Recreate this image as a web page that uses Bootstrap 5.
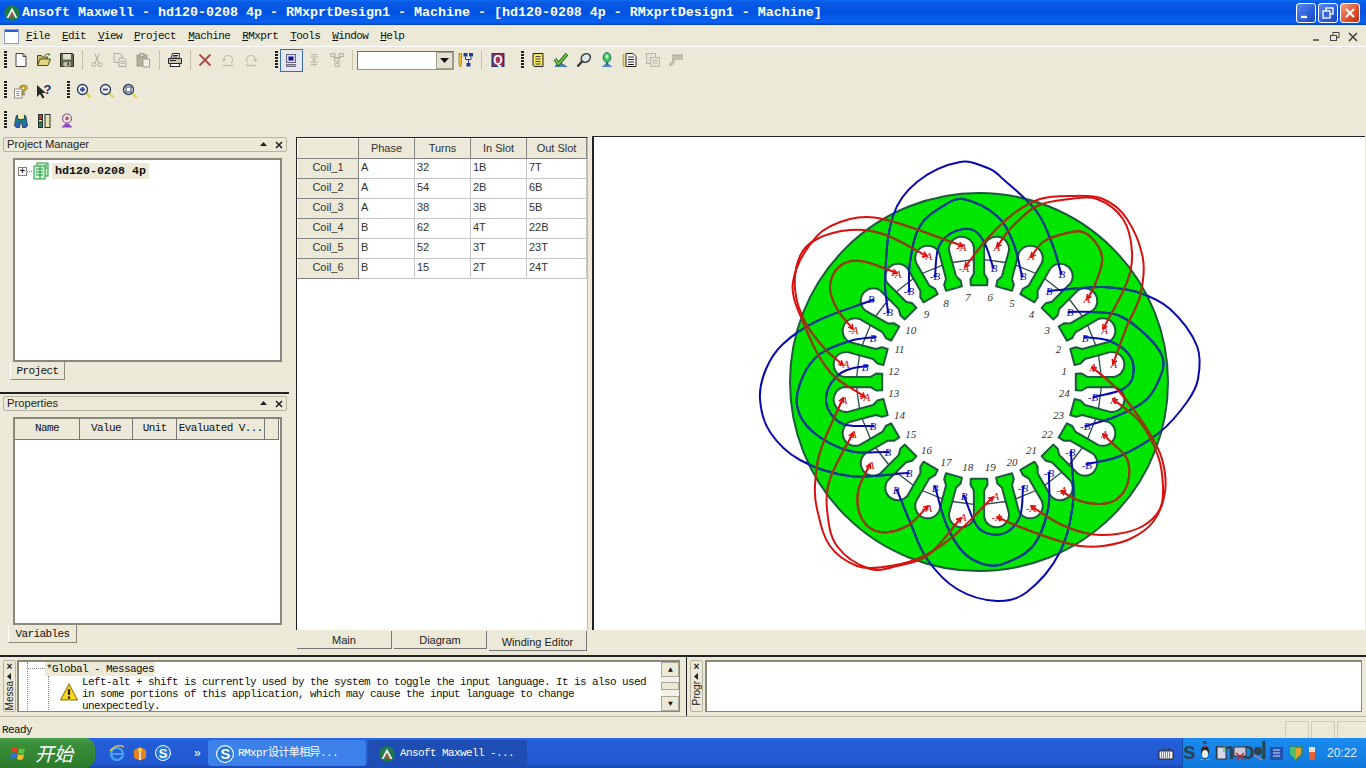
<!DOCTYPE html>
<html lang="en">
<head>
<meta charset="utf-8">
<title>Ansoft Maxwell</title>
<link rel="stylesheet" href="https://cdn.jsdelivr.net/npm/bootstrap@5.3.0/dist/css/bootstrap.min.css">
<style>
html,body{width:1366px;height:768px;overflow:hidden}
body{background:#ece9d8;color:#111;font-family:"Liberation Sans",Arial,sans-serif;font-size:12px;line-height:1.2}
.mono{font-family:"Liberation Mono","Noto Sans CJK SC",monospace;font-size:11px;letter-spacing:-.6px}
.titlebar{height:25px;color:#fff;padding:0 4px;background:linear-gradient(180deg,#0a6af0 0,#0a5ae6 10%,#0052e0 50%,#0a62f0 88%,#0040c8 100%)}
.title-text{font-family:"Liberation Mono",monospace;font-size:13.34px;font-weight:700;margin-left:2px;white-space:pre}
.wbtn{width:20px;height:20px;border:1px solid #fff;border-radius:3px;background:linear-gradient(135deg,#5b8cf0,#2a5cd8 60%,#1c48c0);margin-right:2px}
.wbtn.cl{background:linear-gradient(135deg,#f0a080,#e05030 60%,#c03010)}
.menubar{height:22px;padding:2px 4px 0;border-bottom:1px solid #fff}
.menu-items{gap:12px;margin-left:7px}
.menu-items u{text-decoration:underline}
.mdi{gap:6px;margin-right:3px}
.tb{height:26px;padding-left:4px}
.tb+.tb{margin-top:4px}
.tb+.tb .ti{padding-top:1px}
.tgrip{width:3px;height:18px;background:repeating-linear-gradient(180deg,#222 0 2px,#ece9d8 2px 3px)}
.gr1{margin-left:2.5px}
.ti{width:23px;height:23px}
.ti.on{background:#e6e6f0;border:1px solid #3a6ea5}
.tsep{width:1px;height:20px;background:#c8c4b0;margin:0 3px}
.tsep.w9{margin:0 4px}
.tsep.w8{margin:0 3.750px}
.tgrp{width:3px;height:18px;margin:0 2px 0 12px;background:repeating-linear-gradient(180deg,#222 0 2px,#ece9d8 2px 3px)}
.tgrp2{margin:0 3px 0 11px}
.tcombo{width:97px;height:19px;background:#fff;border:1px solid #9a978a;border-top-color:#716f64;border-left-color:#716f64;padding:0}
.tcaret{width:17px;background:#e4e1d0;border:1px solid #a0a090}
.workarea{height:522px}
.lcol{width:289px}
.lsec1{height:259px}
.lsplit{height:2px;background:#222;flex:none}
.phead{height:15px;margin:4px 2px 0 3px;padding:0 3px;border:1px solid #b8b4a0;border-radius:2px;font-size:11.200px;color:#222}
.phead2{margin-top:2px}
.pbox{margin:6px 7px 0 13px;background:#fff;border:1px solid #8a8878;border-top-width:2px;border-left-width:2px;border-right:2px solid #8a8878;border-bottom:2px solid #8a8878}
.treebox{height:204px;padding:3px 0 0 3px}
.pgbox{height:208px}
.treerow{height:16px}
.expbox{width:9px;height:9px;border:1px solid #808080;font-size:9px;line-height:6px;text-align:center;font-weight:700}
.dotted-h{width:5px;border-bottom:1px dotted #888}
.treename{font-family:"Liberation Mono",monospace;font-size:11.67px;font-weight:700;background:#ece9d8;padding:0 3px;line-height:16px;margin-left:2px}
.xtab{height:18px;border:1px solid #8a8878;border-top:none;border-left-color:#fff;background:#ece9d8;color:#111;text-align:center}
.xtab1{width:55px;margin-left:10px;border-top:0;line-height:18px}
.xtab2{width:69px;margin-left:8px;height:18px;line-height:18px}
.ptbl{border-collapse:collapse;table-layout:fixed;width:264px}
.ptbl th{height:20px;padding:0;background:#ece9d8;font-weight:400;text-align:center;border-right:1px solid #777;border-bottom:1px solid #777;white-space:nowrap}
.pc1{width:64px}.pc2{width:53px}.pc3{width:44px}.pc4{width:87px}.pc5{width:14px}
.gc0{width:61px}.gc1{width:56px}.gc4{width:60px}
.mcol{width:292px;margin-left:7px;margin-top:4px}
.gridbox{height:493px;border-left:1px solid #222;border-top:1px solid #222;border-right:1px solid #bbb;background:#fff;flex:none}
.table.gridtbl{table-layout:fixed;width:289px;margin:0;font-size:11px;color:#333}
.table.gridtbl>:not(caption)>*>*{padding:0 0 1px 2px;height:20px;border:1px solid #c8c8c8;line-height:17px;background:#fff;color:#333;box-shadow:none}
.table.gridtbl>:not(caption)>*>th{padding:0 0 1px 0;text-align:center;font-weight:400;background:#ece9d8;border-color:#fff #848484 #848484 #fff}
.gtabs{gap:2px;padding-left:1px;font-size:11px}
.gtab{height:18px;margin-top:1px;border-right:1px solid #777;border-bottom:1px solid #777;background:#ece9d8;text-align:center;line-height:18px;color:#222}
.gt1{width:95px}.gt2{width:93px}.gt3{width:98px;height:20px;line-height:22px;border-top:0}
.rcol{width:773px;margin-left:4px;margin-top:3px;border-left:2px solid #222;border-top:1px solid #222;height:494px;background:#fff}
.motor{display:block}
.svnum{font-family:"Liberation Serif",serif;font-style:italic;font-size:11px;fill:#333;text-anchor:middle}
.svlab{font-family:"Liberation Serif",serif;font-style:italic;font-size:11px;text-anchor:middle}
.msgrow{height:61px;border-top:2px solid #222;flex:none}
.handle{width:13px;height:52px;margin:3px 0 0 3px;border:1px solid #b8b4a0;border-radius:2px;font-size:10px;color:#222;text-align:center;overflow:hidden}
.handle b{font-size:10px;line-height:11px}
.vtxt{writing-mode:vertical-rl;transform:rotate(180deg);font-size:10px;line-height:11px}
.msgbox{width:663px;height:52px;margin:3px 0 0 1px;border:1px solid #8a8878;border-left-width:2px;border-top-width:2px;background:#fff;overflow:hidden}
.msgtree{margin-left:8px;border-left:1px dotted #888;overflow:hidden;height:50px}
.msg1{height:14px;line-height:14px}
.stub{width:17px;border-bottom:1px dotted #888;height:7px}
.hl{background:#ece9d8;padding:0 1px}
.msg2{line-height:12px;margin-left:20px;border-left:1px dotted #888}
.warn{width:33px;padding-left:11px;padding-top:7px;flex:none}
.sbar{width:18px;flex:none;background:#f4f2e8}
.sb-btn{height:15px;background:#ece9d8;border:1px solid #a8a898;font-size:8px;line-height:13px;text-align:center}
.sb-th{height:8px;margin-top:5px;background:#ece9d8;border:1px solid #a8a898}
.vsplit{width:1px;height:59px;background:#222;margin-left:6px}
.pbox2{width:657px;height:52px;margin:3px 0 0 2px;border:1px solid #8a8878;border-left-width:2px;border-top-width:2px;background:#fff}
.statusbar{height:22px;border-top:1px solid #b8b4a0;flex:none;padding:7px 0 0 2px}
.spane{height:17px;width:24px;border:1px solid #d0ccba;border-bottom:0;margin-right:2px;align-self:flex-end}
.spane.w{width:31px;margin-right:-2px}
.taskbar{height:30px;background:linear-gradient(180deg,#2a6be8 0,#245ed8 12%,#2058d0 85%,#1a48b0 100%);color:#fff;flex:none}
.startb{width:95px;height:30px;border-radius:0 10px 10px 0;background:linear-gradient(180deg,#4aa24a 0,#3a8e3a 20%,#2e7d2e 90%);padding-left:9px;gap:6px}
.startt{font-family:"Noto Sans CJK SC",sans-serif;font-size:19px;font-style:italic;color:#fff}
.ql{width:113px;padding-left:14px;gap:7px}
.tbtn{width:158px;height:26px;margin-right:2px;border-radius:3px;background:#3c80ea;padding:2px 0 0 8px;gap:4px;white-space:nowrap;color:#fff}
.tbtn.act{width:159px;background:#1e4eb4;padding-left:11px;gap:5px}
.tray{width:184px;height:30px;background:linear-gradient(180deg,#1a8cf0,#1078dc);border-left:1px solid #0c50b0;padding-left:16px;gap:5px}
.wm{font-family:"Liberation Sans",sans-serif;font-weight:700;font-size:23px;color:#2c4258;letter-spacing:6px;left:0;top:0}
.clock{font-size:12px;color:#e4eefc;margin-left:6px}
</style>
</head>
<body class="d-flex flex-column">
<svg class="d-none" xmlns="http://www.w3.org/2000/svg">
<symbol id="i-new" viewBox="0 0 16 16"><path d="M3 1.500h7l3 3v10H3z" fill="#fff" stroke="#444"/><path d="M10 1.500v3h3" fill="none" stroke="#444"/></symbol>
<symbol id="i-open" viewBox="0 0 16 16"><path d="M1.500 13.500v-10h4l1 1.500h5v2" fill="#c8bc70" stroke="#4a4a20"/><path d="M1.500 13.500L4 7h10.500L12 13.500z" fill="#e4d67c" stroke="#4a4a20"/><path d="M8 4q3-3.500 6-1.500" fill="none" stroke="#4a7a3a"/><path d="M13 1l1.500 2-2.500 .5z" fill="#4a7a3a"/></symbol>
<symbol id="i-save" viewBox="0 0 16 16"><path d="M1.500 1.500h12l1 1v12h-13z" fill="#62664a" stroke="#2a2c1c"/><rect x="4" y="2" width="8" height="5.500" fill="#e0e0d0"/><rect x="4.500" y="10" width="7" height="4.500" fill="#c0c0b0"/><rect x="8.500" y="10.500" width="1.500" height="3" fill="#333"/></symbol>
<symbol id="i-cut" viewBox="0 0 16 16"><g fill="none" stroke="#b0aea0"><circle cx="5" cy="12.500" r="2"/><circle cx="11" cy="12.500" r="2"/><path d="M6 11L10.500 1.500M10 11L5.500 1.500"/></g></symbol>
<symbol id="i-copy" viewBox="0 0 16 16"><g fill="#e8e6da" stroke="#b0aea0"><path d="M2 1.500h6l2 2v7H2z"/><path d="M7 6h5l2 2v6.500H7z"/></g><path d="M8.500 9.500h4M8.500 11.500h4" stroke="#b0aea0"/></symbol>
<symbol id="i-paste" viewBox="0 0 16 16"><rect x="2" y="3" width="10" height="11" fill="#b0ae9c" stroke="#a0a090"/><rect x="5" y="1.500" width="4" height="3" fill="#d8d4c0" stroke="#a0a090"/><path d="M8 7h6.500v8H8z" fill="#f0eee4" stroke="#a0a090"/></symbol>
<symbol id="i-print" viewBox="0 0 16 16"><path d="M4 6l1.500-4.500h7L12 6" fill="#fff" stroke="#222"/><path d="M1.500 6.500h13v5h-13z" fill="#c8c4b0" stroke="#222"/><path d="M4 11.500l-1 3h10l-1-3z" fill="#fff" stroke="#222"/><path d="M6 3.500h5M5.500 5h5M3 8.500h6" stroke="#222"/></symbol>
<symbol id="i-x" viewBox="0 0 16 16"><path d="M2.500 2.500l11 11M13.500 2.500l-11 11" stroke="#b04a44" stroke-width="1.800" fill="none"/></symbol>
<symbol id="i-undo" viewBox="0 0 16 16"><path d="M4 8.500Q3.500 3.500 8 3.500T12.500 8q0 2-1.500 3" fill="none" stroke="#c4c0b0" stroke-width="1.200"/><path d="M1.500 7l2.500 3L6 7z" fill="#c4c0b0"/><path d="M3 13.500h10" stroke="#c4c0b0" stroke-width="1.500"/></symbol>
<symbol id="i-redo" viewBox="0 0 16 16"><path d="M12 8.500Q12.500 3.500 8 3.500T3.500 8q0 2 1.500 3" fill="none" stroke="#c4c0b0" stroke-width="1.200"/><path d="M10 7l2 3 2.500-3z" fill="#c4c0b0"/><path d="M3 13.500h10" stroke="#c4c0b0" stroke-width="1.500"/></symbol>
<symbol id="i-mon" viewBox="0 0 16 16"><rect x="3.500" y="2.500" width="9" height="8" fill="#dcdce8" stroke="#667"/><rect x="5.500" y="4.500" width="5" height="4" fill="#10109a"/><path d="M3.500 12.500h9v2h-9z" fill="#b8b4c0" stroke="#667"/></symbol>
<symbol id="i-g1" viewBox="0 0 16 16"><g stroke="#bcb8a8" fill="none"><path d="M5 2.500h6M4 5h8M6 7.500h4M4 10h8M5 12.500h6"/><path d="M8 2.500v12"/></g></symbol>
<symbol id="i-g2" viewBox="0 0 16 16"><g stroke="#bcb8a8" fill="#e4e2d4"><rect x="1.500" y="1.500" width="4.500" height="3"/><rect x="10" y="1.500" width="4.500" height="3"/><rect x="5.500" y="6.500" width="5" height="3"/><rect x="6" y="11.500" width="4" height="3"/><path d="M4 4.500v1h8v-1M8 9.500v2" fill="none"/></g></symbol>
<symbol id="i-tree" viewBox="0 0 16 16"><path d="M1 1.500h2.500v11L2.300 15 1 12.500z" fill="#f0c828" stroke="#70581a" stroke-width=".6"/><g fill="#223c90"><rect x="5.500" y="1" width="4" height="3.500"/><rect x="11" y="1" width="4" height="3.500"/><rect x="8.500" y="11" width="4" height="3.500"/></g><path d="M7.500 4.500v3h5.500v-3M10.500 7.500v3.500" fill="none" stroke="#223c90"/></symbol>
<symbol id="i-q" viewBox="0 0 16 16"><rect x="1.500" y="1" width="13" height="14" fill="#30306a"/><rect x="3" y="2" width="10" height="12" fill="#a03058"/><text x="8" y="12.300" text-anchor="middle" font-family="Liberation Sans" font-size="12" font-weight="700" fill="#fff">Q</text></symbol>
<symbol id="i-ydoc" viewBox="0 0 16 16"><path d="M3 1.500h10v13H5l-2-1z" fill="#f0e460" stroke="#222"/><path d="M5.500 4.500h5M5.500 7h5M5.500 9.500h5M5.500 12h5" stroke="#444"/></symbol>
<symbol id="i-chk" viewBox="0 0 16 16"><path d="M2 15q3-6 6-4t6 4" fill="#5080d0" stroke="#204080" stroke-width=".7"/><path d="M2 7l3.500 5L14 2" fill="none" stroke="#2a5a28" stroke-width="3.600"/><path d="M2 7l3.500 5L14 2" fill="none" stroke="#70d040" stroke-width="1.800"/></symbol>
<symbol id="i-mag" viewBox="0 0 16 16"><ellipse cx="9.800" cy="6" rx="4.800" ry="4" transform="rotate(-35 9.800 6)" fill="#d8e8e8" stroke="#333" stroke-width="1.500"/><path d="M6 9.500L1.500 14.500" stroke="#333" stroke-width="2.300"/></symbol>
<symbol id="i-fig" viewBox="0 0 16 16"><path d="M2.500 15L8 10.500 13.500 15z" fill="#5088d0"/><ellipse cx="8" cy="5.500" rx="3.800" ry="4.800" fill="#40c868" stroke="#106a50"/><ellipse cx="8" cy="4.500" rx="1.500" ry="2" fill="#d0f0c0"/><path d="M8 10v3" stroke="#106a50" stroke-width="1.500"/></symbol>
<symbol id="i-dl" viewBox="0 0 16 16"><path d="M4 1.500h7l3 3v10H4z" fill="#fff" stroke="#222"/><path d="M6 5h6M6 7.500h6M6 10h6M6 12.500h6" stroke="#222"/><path d="M1.500 2v11l.8 2" stroke="#d8a820" stroke-width="1.600" fill="none"/></symbol>
<symbol id="i-gd" viewBox="0 0 16 16"><g fill="#e4e2d6" stroke="#bcb8a8"><rect x="1.500" y="1.500" width="9" height="10"/><rect x="5.500" y="5.500" width="9" height="9"/></g><path d="M7.500 8.500h5M7.500 11h5" stroke="#bcb8a8"/></symbol>
<symbol id="i-gf" viewBox="0 0 16 16"><path d="M4 3h11v5H7v2H4zM1 12l3-3h2v3l-3 2H1z" fill="#c4c0b0"/><path d="M4 3h11" stroke="#a8a498"/></symbol>
<symbol id="i-hdoc" viewBox="0 0 16 16"><path d="M1.500 6h7.500v9H1.500z" fill="#fff" stroke="#8a8a7a"/><path d="M3.500 8.500h3M3.500 10.500h3M3.500 12.500h3" stroke="#8a8a7a"/><text x="10.500" y="11.500" text-anchor="middle" font-family="Liberation Sans" font-size="15" font-weight="700" fill="#e4c020" stroke="#6a5a18" stroke-width=".5">?</text></symbol>
<symbol id="i-harr" viewBox="0 0 16 16"><path d="M1 2v12l3-3 2.500 4.500 2-1-2.500-4.500h4z" fill="#2a2a2a"/><text x="11.500" y="10.500" text-anchor="middle" font-family="Liberation Sans" font-size="13" font-weight="700" fill="#28286a">?</text></symbol>
<symbol id="i-zp" viewBox="0 0 16 16"><path d="M10 10l4.500 4.500" stroke="#e0d050" stroke-width="2.300"/><circle cx="6.500" cy="6.500" r="5" fill="#f4f4f0" stroke="#283858" stroke-width="1.300"/><path d="M4 6.500h5M6.500 4v5" stroke="#3040a8" stroke-width="1.800"/></symbol>
<symbol id="i-zm" viewBox="0 0 16 16"><path d="M10 10l4.500 4.500" stroke="#e0d050" stroke-width="2.300"/><circle cx="6.500" cy="6.500" r="5" fill="#f4f4f0" stroke="#283858" stroke-width="1.300"/><path d="M4 6.500h5" stroke="#3040a8" stroke-width="1.800"/></symbol>
<symbol id="i-zb" viewBox="0 0 16 16"><path d="M10 10l4.500 4.500" stroke="#e0d050" stroke-width="2.300"/><circle cx="6.500" cy="6.500" r="5" fill="#f4f4f0" stroke="#283858" stroke-width="1.300"/><rect x="4" y="4" width="5" height="5" fill="#fff" stroke="#283858"/></symbol>
<symbol id="i-bin" viewBox="0 0 16 16"><path d="M3 4q0-1.500 2-2v4h6V2q2 .5 2 2l1.500 9-2 1.500h-3L8.500 9h-1l-1 5.500h-3l-2-1.500z" fill="#1c7a90" stroke="#123" stroke-width=".7"/><rect x="5" y="1" width="6" height="5" rx="2" fill="#f0f0b0"/><rect x="2.500" y="10" width="3.500" height="4" fill="#3060c0"/><rect x="10" y="10" width="3.500" height="4" fill="#3060c0"/></symbol>
<symbol id="i-bars" viewBox="0 0 16 16"><rect x="2.500" y="1.500" width="4" height="13" fill="#e8e8c0" stroke="#233"/><rect x="2.500" y="1.500" width="4" height="5" fill="#c04030" stroke="#233"/><rect x="2.500" y="9" width="4" height="5.500" fill="#30804a" stroke="#233"/><rect x="9" y="1.500" width="5" height="13" fill="#e8e4b0" stroke="#233"/></symbol>
<symbol id="i-pf" viewBox="0 0 16 16"><circle cx="8" cy="5.500" r="4.500" fill="#f4e4e4" stroke="#806090" stroke-width="1.200"/><circle cx="8" cy="5.500" r="2" fill="#c06068"/><path d="M8 10c-2 .5-3 2-5.500 4.500h11C11 12 10 10.500 8 10z" fill="#8848c8"/></symbol>
<symbol id="i-logo" viewBox="0 0 16 16"><circle cx="8" cy="8" r="7.800" fill="#1e7a4a"/><path d="M8 2.500L2.500 13h2L8 6.500 11.500 13h2z" fill="#f4f4ec"/><path d="M8 7L5.500 13h1.300L8 10l1.200 3h1.300z" fill="#d05040"/></symbol>
<symbol id="i-proj" viewBox="0 0 18 18"><rect x="5" y="1" width="11" height="13" fill="#c8f0c8" stroke="#1e9a3a"/><rect x="2" y="4" width="11" height="13" fill="#d8f4d8" stroke="#1e9a3a"/><path d="M4 7h7M4 10h7M4 13h7M8 4v13" stroke="#1e9a3a"/><path d="M13 3h2M13 6h2" stroke="#1e9a3a"/></symbol>
<symbol id="i-warn" viewBox="0 0 16 16"><path d="M8 1L15.500 15H.5z" fill="#ffd820" stroke="#a08010"/><path d="M8 5.500v5" stroke="#222" stroke-width="2"/><circle cx="8" cy="12.800" r="1.100" fill="#222"/></symbol>
<symbol id="i-ie" viewBox="0 0 16 16"><ellipse cx="8" cy="9" rx="6" ry="6" fill="none" stroke="#4aa0f0" stroke-width="2.400"/><path d="M3 9h10" stroke="#4aa0f0" stroke-width="2"/><path d="M1 6q7-8 14-4" fill="none" stroke="#f4d040" stroke-width="1.200"/></symbol>
<symbol id="i-box" viewBox="0 0 16 16"><path d="M2 5l6-3 6 3v8l-6 2.500L2 13z" fill="#e88020"/><path d="M8 7v8" stroke="#fff" stroke-width="1.500"/><circle cx="8" cy="5" r="2" fill="#f4e040"/></symbol>
<symbol id="i-s" viewBox="0 0 16 16"><circle cx="8" cy="8" r="7.500" fill="#2478d8" stroke="#fff"/><text x="8" y="12.500" text-anchor="middle" font-family="Liberation Sans" font-size="13" font-weight="700" fill="#fff">S</text></symbol>
<symbol id="i-kb" viewBox="0 0 16 16"><rect x="1" y="6" width="14" height="8" fill="#f0f0f0" stroke="#222"/><path d="M3 8h10M3 10h10M3 12h10" stroke="#222" stroke-dasharray="1 1"/><path d="M4 4h9" stroke="#222" stroke-dasharray="1 1"/></symbol>
<symbol id="i-flag" viewBox="0 0 20 20"><path d="M3 5q3-2 6 0l-1 5q-3-2-6 0z" fill="#e04020"/><path d="M10 5q3 2 6 0l-1 5q-3 2-6 0z" fill="#60c040"/><path d="M2 11q3-2 6 0l-1 5q-3-2-6 0z" fill="#3070e0"/><path d="M9 11q3 2 6 0l-1 5q-3 2-6 0z" fill="#f0c020"/></symbol>
</svg>

<div class="titlebar d-flex align-items-center">
  <svg width="16" height="16"><use href="#i-logo"/></svg>
  <span class="title-text flex-grow-1">Ansoft Maxwell - hd120-0208 4p - RMxprtDesign1 - Machine - [hd120-0208 4p - RMxprtDesign1 - Machine]</span>
  <span class="wbtn d-flex align-items-center justify-content-center"><svg width="14" height="14"><path d="M2 11h6" stroke="#fff" stroke-width="2.400"/></svg></span>
  <span class="wbtn d-flex align-items-center justify-content-center"><svg width="14" height="14"><g fill="none" stroke="#fff" stroke-width="1.300"><rect x="5" y="2" width="7" height="6"/><rect x="2" y="5" width="7" height="7" fill="#3a68d8"/></g></svg></span>
  <span class="wbtn cl d-flex align-items-center justify-content-center"><svg width="14" height="14"><path d="M3 3l8 8M11 3l-8 8" stroke="#fff" stroke-width="2"/></svg></span>
</div>
<div class="menubar d-flex align-items-center mono">
  <svg width="15" height="15"><rect x=".5" y=".5" width="14" height="14" fill="#fff" stroke="#8aa0d0"/><rect x="1" y="1" width="13" height="2" fill="#2a5cd8"/></svg>
  <div class="menu-items d-flex flex-grow-1">
    <span><u>F</u>ile</span><span><u>E</u>dit</span><span><u>V</u>iew</span><span><u>P</u>roject</span><span><u>M</u>achine</span><span><u>R</u>Mxprt</span><span><u>T</u>ools</span><span><u>W</u>indow</span><span><u>H</u>elp</span>
  </div>
  <div class="mdi d-flex align-items-center">
    <svg width="12" height="12"><path d="M2 9h6" stroke="#444" stroke-width="1.500"/></svg>
    <svg width="12" height="12"><g fill="none" stroke="#444"><rect x="4" y="1.500" width="6" height="5"/><rect x="1.500" y="4.500" width="6" height="5" fill="#ece9d8"/></g></svg>
    <svg width="12" height="12"><path d="M2 2l8 8M10 2l-8 8" stroke="#333" stroke-width="1.400"/></svg>
  </div>
</div>

<div class="tb d-flex align-items-center">
  <span class="tgrip"></span>
  <span class="ti gr1 d-flex align-items-center justify-content-center"><svg width="16" height="16"><use href="#i-new"/></svg></span>
  <span class="ti d-flex align-items-center justify-content-center"><svg width="16" height="16"><use href="#i-open"/></svg></span>
  <span class="ti d-flex align-items-center justify-content-center"><svg width="16" height="16"><use href="#i-save"/></svg></span>
  <span class="tsep"></span>
  <span class="ti d-flex align-items-center justify-content-center"><svg width="16" height="16"><use href="#i-cut"/></svg></span>
  <span class="ti d-flex align-items-center justify-content-center"><svg width="16" height="16"><use href="#i-copy"/></svg></span>
  <span class="ti d-flex align-items-center justify-content-center"><svg width="16" height="16"><use href="#i-paste"/></svg></span>
  <span class="tsep w9"></span>
  <span class="ti d-flex align-items-center justify-content-center"><svg width="16" height="16"><use href="#i-print"/></svg></span>
  <span class="tsep"></span>
  <span class="ti d-flex align-items-center justify-content-center"><svg width="16" height="16"><use href="#i-x"/></svg></span>
  <span class="ti d-flex align-items-center justify-content-center"><svg width="16" height="16"><use href="#i-undo"/></svg></span>
  <span class="ti d-flex align-items-center justify-content-center"><svg width="16" height="16"><use href="#i-redo"/></svg></span>
  <span class="tgrp"></span>
  <span class="ti on d-flex align-items-center justify-content-center"><svg width="16" height="16"><use href="#i-mon"/></svg></span>
  <span class="ti d-flex align-items-center justify-content-center"><svg width="16" height="16"><use href="#i-g1"/></svg></span>
  <span class="ti d-flex align-items-center justify-content-center"><svg width="16" height="16"><use href="#i-g2"/></svg></span>
  <span class="tsep w8"></span>
  <div class="tcombo d-flex justify-content-end"><span class="tcaret d-flex align-items-center justify-content-center"><svg width="9" height="5"><path d="M0 0h9L4.500 5z" fill="#111"/></svg></span></div>
  <span class="ti d-flex align-items-center justify-content-center"><svg width="16" height="16"><use href="#i-tree"/></svg></span>
  <span class="tsep w9"></span>
  <span class="ti d-flex align-items-center justify-content-center"><svg width="16" height="16"><use href="#i-q"/></svg></span>
  <span class="tgrp"></span>
  <span class="ti d-flex align-items-center justify-content-center"><svg width="16" height="16"><use href="#i-ydoc"/></svg></span>
  <span class="ti d-flex align-items-center justify-content-center"><svg width="16" height="16"><use href="#i-chk"/></svg></span>
  <span class="ti d-flex align-items-center justify-content-center"><svg width="16" height="16"><use href="#i-mag"/></svg></span>
  <span class="ti d-flex align-items-center justify-content-center"><svg width="16" height="16"><use href="#i-fig"/></svg></span>
  <span class="ti d-flex align-items-center justify-content-center"><svg width="16" height="16"><use href="#i-dl"/></svg></span>
  <span class="ti d-flex align-items-center justify-content-center"><svg width="16" height="16"><use href="#i-gd"/></svg></span>
  <span class="ti d-flex align-items-center justify-content-center"><svg width="16" height="16"><use href="#i-gf"/></svg></span>
</div>
<div class="tb d-flex align-items-center">
  <span class="tgrip"></span>
  <span class="ti gr1 d-flex align-items-center justify-content-center"><svg width="16" height="16"><use href="#i-hdoc"/></svg></span>
  <span class="ti d-flex align-items-center justify-content-center"><svg width="16" height="16"><use href="#i-harr"/></svg></span>
  <span class="tgrp tgrp2"></span>
  <span class="ti d-flex align-items-center justify-content-center"><svg width="16" height="16"><use href="#i-zp"/></svg></span>
  <span class="ti d-flex align-items-center justify-content-center"><svg width="16" height="16"><use href="#i-zm"/></svg></span>
  <span class="ti d-flex align-items-center justify-content-center"><svg width="16" height="16"><use href="#i-zb"/></svg></span>
</div>
<div class="tb d-flex align-items-center">
  <span class="tgrip"></span>
  <span class="ti gr1 d-flex align-items-center justify-content-center"><svg width="16" height="16"><use href="#i-bin"/></svg></span>
  <span class="ti d-flex align-items-center justify-content-center"><svg width="16" height="16"><use href="#i-bars"/></svg></span>
  <span class="ti d-flex align-items-center justify-content-center"><svg width="16" height="16"><use href="#i-pf"/></svg></span>
</div>

<div class="workarea d-flex">
  <div class="lcol d-flex flex-column">
    <div class="lsec1">
      <div class="phead d-flex align-items-center justify-content-between"><span>Project Manager</span><span class="d-flex gap-2"><svg width="7" height="11"><path d="M0 7h7L3.500 3z" fill="#222"/></svg><svg width="8" height="11"><path d="M1 3l6 6M7 3l-6 6" stroke="#222" stroke-width="1.600"/></svg></span></div>
      <div class="pbox treebox">
        <div class="treerow d-flex align-items-center">
          <span class="expbox">+</span><span class="dotted-h"></span>
          <svg width="18" height="18"><use href="#i-proj"/></svg>
          <span class="treename">hd120-0208 4p</span>
        </div>
      </div>
      <div class="xtab xtab1 mono">Project</div>
    </div>
    <div class="lsplit"></div>
    <div class="phead phead2 d-flex align-items-center justify-content-between"><span>Properties</span><span class="d-flex gap-2"><svg width="7" height="11"><path d="M0 7h7L3.500 3z" fill="#222"/></svg><svg width="8" height="11"><path d="M1 3l6 6M7 3l-6 6" stroke="#222" stroke-width="1.600"/></svg></span></div>
    <div class="pbox pgbox">
      <table class="ptbl mono">
        <colgroup><col class="pc1"><col class="pc2"><col class="pc3"><col class="pc4"><col class="pc5"></colgroup>
        <thead><tr><th>Name</th><th>Value</th><th>Unit</th><th>Evaluated V...</th><th></th></tr></thead>
      </table>
    </div>
    <div class="xtab xtab2 mono">Variables</div>
  </div>

  <div class="mcol d-flex flex-column">
    <div class="gridbox">
      <table class="table table-bordered gridtbl">
        <colgroup><col class="gc0"><col class="gc1"><col class="gc1"><col class="gc1"><col class="gc4"></colgroup>
        <thead><tr><th></th><th>Phase</th><th>Turns</th><th>In Slot</th><th>Out Slot</th></tr></thead>
        <tbody>
          <tr><th>Coil_1</th><td>A</td><td>32</td><td>1B</td><td>7T</td></tr>
          <tr><th>Coil_2</th><td>A</td><td>54</td><td>2B</td><td>6B</td></tr>
          <tr><th>Coil_3</th><td>A</td><td>38</td><td>3B</td><td>5B</td></tr>
          <tr><th>Coil_4</th><td>B</td><td>62</td><td>4T</td><td>22B</td></tr>
          <tr><th>Coil_5</th><td>B</td><td>52</td><td>3T</td><td>23T</td></tr>
          <tr><th>Coil_6</th><td>B</td><td>15</td><td>2T</td><td>24T</td></tr>
        </tbody>
      </table>
    </div>
    <div class="gtabs d-flex align-items-start">
      <div class="gtab gt1">Main</div><div class="gtab gt2">Diagram</div><div class="gtab gt3">Winding Editor</div>
    </div>
  </div>

  <div class="rcol">
    <svg id="motor" class="motor" width="771" height="493" viewBox="594 138 771 493" xmlns="http://www.w3.org/2000/svg"></svg>
  </div>
</div>

<div class="msgrow d-flex align-items-start">
  <div class="handle d-flex flex-column align-items-center"><b>×</b><svg width="7" height="9"><path d="M5 1v7L1 4.500z" fill="#222"/></svg><span class="vtxt">Messa</span></div>
  <div class="msgbox d-flex mono">
    <div class="flex-grow-1 overflow-hidden">
      <div class="msgtree">
        <div class="msg1 d-flex align-items-start"><span class="stub"></span><span class="hl">*Global - Messages</span></div>
        <div class="msg2 d-flex">
          <div class="warn"><svg width="18" height="18"><use href="#i-warn"/></svg></div>
          <div>Left-alt + shift is currently used by the system to toggle the input language. It is also used<br>in some portions of this application, which may cause the input language to change<br>unexpectedly.</div>
        </div>
      </div>
    </div>
    <div class="sbar d-flex flex-column justify-content-between">
      <div><div class="sb-btn">▲</div><div class="sb-th"></div></div>
      <div class="sb-btn">▼</div>
    </div>
  </div>
  <div class="vsplit"></div>
  <div class="handle d-flex flex-column align-items-center"><b>×</b><svg width="7" height="9"><path d="M5 1v7L1 4.500z" fill="#222"/></svg><span class="vtxt">Progr</span></div>
  <div class="pbox2"></div>
</div>

<div class="statusbar d-flex align-items-center justify-content-between mono">
  <span>Ready</span>
  <span class="d-flex align-self-end"><span class="spane"></span><span class="spane"></span><span class="spane w"></span></span>
</div>

<div class="taskbar d-flex align-items-center">
  <div class="startb d-flex align-items-center"><svg width="20" height="20"><use href="#i-flag"/></svg><span class="startt">开始</span></div>
  <div class="ql d-flex align-items-center">
    <svg width="16" height="16"><use href="#i-ie"/></svg>
    <svg width="16" height="16"><use href="#i-box"/></svg>
    <svg width="16" height="16"><use href="#i-s"/></svg>
    <span class="ms-3">»</span>
  </div>
  <div class="tbtn d-flex align-items-center mono"><svg width="18" height="18"><use href="#i-s"/></svg><span>RMxpr设计单相异...</span></div>
  <div class="tbtn act d-flex align-items-center mono"><svg width="16" height="16"><use href="#i-logo"/></svg><span>Ansoft Maxwell -...</span></div>
  <div class="flex-grow-1 d-flex justify-content-end align-items-center pe-2"><svg width="16" height="16"><use href="#i-kb"/></svg></div>
  <div class="tray position-relative d-flex align-items-center">
    <span class="wm position-absolute">simol</span>
    <svg class="position-relative" width="12" height="16" viewBox="0 0 12 16"><ellipse cx="6" cy="6" rx="4" ry="5" fill="#222"/><ellipse cx="6" cy="9" rx="3" ry="4" fill="#f0f0e0"/><path d="M1 14h4v1H1zM7 14h4v1H7z" fill="#e88020"/><circle cx="6" cy="1.500" r="1.300" fill="#d03030"/></svg>
    <svg class="position-relative" width="12" height="14" viewBox="0 0 12 14"><rect x="1" y="1" width="9" height="12" fill="#d8d8e8" stroke="#333"/><path d="M8 0v6" stroke="#30b040"/></svg>
    <svg class="position-relative" width="14" height="15" viewBox="0 0 14 15"><rect x="1" y="1" width="12" height="9" fill="#c8c8d8" stroke="#333"/><path d="M3 7l8 7M11 7l-8 7" stroke="#d02020" stroke-width="1.500"/></svg>
    <svg class="position-relative" width="12" height="15" viewBox="0 0 12 15"><circle cx="6" cy="5" r="4" fill="#304050"/><path d="M2 9l8 5" stroke="#88a" stroke-width="2"/></svg>
    <svg class="position-relative" width="15" height="15" viewBox="0 0 15 15"><rect x="1" y="1" width="13" height="13" fill="#2050b0"/><path d="M4 4h7M4 7h7M4 10h7" stroke="#dde"/></svg>
    <svg class="position-relative" width="14" height="15" viewBox="0 0 14 15"><path d="M1 1h12v7l-6 6-6-6z" fill="#e8a030" stroke="#2a8a5a" stroke-width="1.500"/><path d="M7 1v13L1 8V1z" fill="#50c070"/></svg>
    <svg class="position-relative" width="8" height="15" viewBox="0 0 8 15"><rect x="1" y="1" width="6" height="13" rx="2" fill="#e86030"/><rect x="1" y="1" width="6" height="5" fill="#f0e0d0"/></svg>
    <span class="clock position-relative">20:22</span>
  </div>
</div>

<script>
(function(){
var cx=979,cy=383,R=189;
function P(r,t,deg){var a=deg*Math.PI/180;return [cx+r*Math.cos(a)-t*Math.sin(a),cy-r*Math.sin(a)-t*Math.cos(a)];}
function f(p){return p[0].toFixed(1)+' '+p[1].toFixed(1);}
var inner='',k,th;
for(k=1;k<=24;k++){
  th=7.5+15*(k-1);
  inner+=(k==1?'M':'L')+f(P(97,-4.5,th))+' L'+f(P(103,-5,th))+' L'+f(P(108,-9,th))+' L'+f(P(134,-12.5,th))+' A12.5 12.5 0 0 0 '+f(P(134,12.5,th))+' L'+f(P(108,9,th))+' L'+f(P(103,5,th))+' L'+f(P(97,4.5,th))+' ';
}
inner+='Z';
var outer='M'+(cx-R)+' '+cy+' a'+R+' '+R+' 0 1 0 '+(2*R)+' 0 a'+R+' '+R+' 0 1 0 '+(-2*R)+' 0 Z';
var stator=outer+' '+inner;
function len(a,b){return Math.hypot(a[0]-b[0],a[1]-b[1]);}
function tan(p,i){
  var a=p[i>0?i-1:0],c=p[i<p.length-1?i+1:i],l=len(a,c)||1;
  return [(c[0]-a[0])/l,(c[1]-a[1])/l];
}
function spline(p){
  var d='M'+p[0][0]+' '+p[0][1],i;
  for(i=0;i<p.length-1;i++){
    var b=p[i],c=p[i+1],s=len(b,c)/2.9,t1=tan(p,i),t2=tan(p,i+1);
    d+=' C'+(b[0]+t1[0]*s).toFixed(1)+' '+(b[1]+t1[1]*s).toFixed(1)+' '+(c[0]-t2[0]*s).toFixed(1)+' '+(c[1]-t2[1]*s).toFixed(1)+' '+c[0]+' '+c[1];
  }
  return d;
}
var red=[
[[965,268],[987,240],[1013,215],[1040,200],[1070,197],[1103,200],[1127,220],[1143,260],[1140,297],[1127,327],[1113,365]],
[[997,248],[1010,230],[1037,207],[1070,200],[1097,200],[1123,220],[1132,253],[1127,283],[1103,330]],
[[1031,258],[1043,243],[1063,235],[1083,233],[1098,247],[1102,263],[1093,290],[1087,300]],
[[963,247],[883,220],[850,220],[817,237],[793,283],[803,323],[830,373],[865,398]],
[[927,257],[883,235],[850,231],[817,240],[800,257],[795,290],[805,323],[825,350],[843,366]],
[[897,274],[860,262],[840,267],[830,287],[837,310],[853,330]],
[[843,399],[820,453],[815,487],[817,510],[830,547],[857,567],[883,568],[917,560],[950,540],[993,498]],
[[853,434],[830,480],[827,510],[837,547],[870,570],[897,567],[927,557],[961,519]],
[[870,465],[858,493],[862,520],[880,533],[907,527],[928,507]],
[[997,518],[1020,528],[1053,540],[1080,547],[1103,547],[1130,540],[1153,523],[1165,493],[1162,460],[1147,430],[1117,390],[1092,368]],
[[1031,507],[1060,525],[1090,535],[1117,535],[1143,527],[1160,510],[1163,487],[1158,457],[1140,423],[1113,400]],
[[1061,492],[1080,502],[1100,505],[1117,500],[1128,483],[1127,460],[1110,442],[1103,435]]
];
var blue=[
[[888,313],[885,283],[893,217],[917,183],[960,163],[990,170],[1003,180],[1037,213],[1053,247],[1061,274]],
[[909,292],[910,263],[920,227],[943,207],[963,200],[997,217],[1013,243],[1022,277]],
[[935,277],[938,250],[947,237],[963,230],[975,232],[985,245],[993,268]],
[[1049,292],[1070,290],[1103,288],[1137,293],[1170,310],[1197,347],[1198,380],[1187,403],[1160,433],[1120,457],[1087,465]],
[[1069,313],[1093,313],[1120,317],[1147,337],[1162,357],[1162,373],[1147,400],[1117,417],[1086,427]],
[[1085,338],[1110,342],[1130,357],[1133,377],[1123,390],[1094,398]],
[[1071,453],[1073,503],[1060,553],[1027,593],[997,602],[957,590],[927,560],[910,523],[897,491]],
[[1049,474],[1048,510],[1033,547],[1003,565],[983,565],[963,553],[947,527],[935,488]],
[[1023,488],[1020,517],[1007,533],[990,535],[977,527],[964,497]],
[[908,474],[850,477],[800,461],[770,433],[760,400],[766,370],[783,345],[817,322],[873,301]],
[[888,453],[850,452],[813,433],[797,407],[803,377],[820,355],[850,342],[875,338]],
[[873,427],[843,425],[828,410],[827,393],[837,377],[850,370],[867,367]]
];
var labs=[['A','A'],['A','B'],['A','B'],['B','B'],['A','B'],['A','B'],['-A','-A'],['-A','-B'],['-A','-B'],['B','-B'],['-A','B'],['-A','B'],['A','-A'],['A','B'],['A','B'],['B','B'],['-A','B'],['-A','B'],['-A','-A'],['-A','-B'],['-A','-B'],['-B','-B'],['A','-B'],['A','-B']];
var s='<defs><clipPath id="stc"><path clip-rule="evenodd" d="'+stator+'"/></clipPath>'+
 '<marker id="ar" markerWidth="8" markerHeight="8" refX="6" refY="4" orient="auto-start-reverse" markerUnits="userSpaceOnUse"><path d="M1.500 1.500L6 4L1.500 6.500" fill="none" stroke="#d81010" stroke-width="1.500"/></marker>'+
 '<marker id="bl" markerWidth="4" markerHeight="4" refX="2" refY="2" markerUnits="userSpaceOnUse"><circle cx="2" cy="2" r="1.600" fill="#0808b0"/></marker></defs>';
s+='<path d="'+stator+'" fill="#00e600" fill-rule="evenodd" stroke="#1c5a3c" stroke-width="2" stroke-linejoin="round"/>';
var dv='';
for(k=1;k<=24;k++){th=7.5+15*(k-1);dv+='M'+f(P(122,-11,th))+' L'+f(P(122,11,th))+' ';}
s+='<path d="'+dv+'" stroke="#2c4a4a" stroke-width="1.300" fill="none"/>';
var txt='';
for(k=1;k<=24;k++){
  th=7.5+15*(k-1);
  var n=P(86,0,th),o=P(136,0,th),i=P(115,0,th);
  txt+='<text x="'+n[0].toFixed(1)+'" y="'+(n[1]+4).toFixed(1)+'" class="svnum">'+k+'</text>';
  txt+='<text x="'+o[0].toFixed(1)+'" y="'+(o[1]+4).toFixed(1)+'" fill="'+(labs[k-1][0].indexOf('A')>=0?'#d81010':'#1010c0')+'" class="svlab">'+labs[k-1][0]+'</text>';
  txt+='<text x="'+i[0].toFixed(1)+'" y="'+(i[1]+4).toFixed(1)+'" fill="'+(labs[k-1][1].indexOf('A')>=0?'#d81010':'#1010c0')+'" class="svlab">'+labs[k-1][1]+'</text>';
}
var rd='',bd='',j;
for(j=0;j<red.length;j++)rd+='<path d="'+spline(red[j])+'"/>';
for(j=0;j<blue.length;j++)bd+='<path d="'+spline(blue[j])+'"/>';
s+='<g fill="none" stroke="#0808b0" stroke-width="2" marker-start="url(#bl)" marker-end="url(#bl)">'+bd+'</g>';
s+='<g fill="none" stroke="#10408c" stroke-width="2" clip-path="url(#stc)">'+bd+'</g>';
s+='<g fill="none" stroke="#d81010" stroke-width="2" marker-start="url(#ar)" marker-end="url(#ar)">'+rd+'</g>';
s+='<g fill="none" stroke="#8a4012" stroke-width="2" clip-path="url(#stc)">'+rd+'</g>';
s+=txt;
document.getElementById('motor').innerHTML=s;
})();
</script>
</body>
</html>
